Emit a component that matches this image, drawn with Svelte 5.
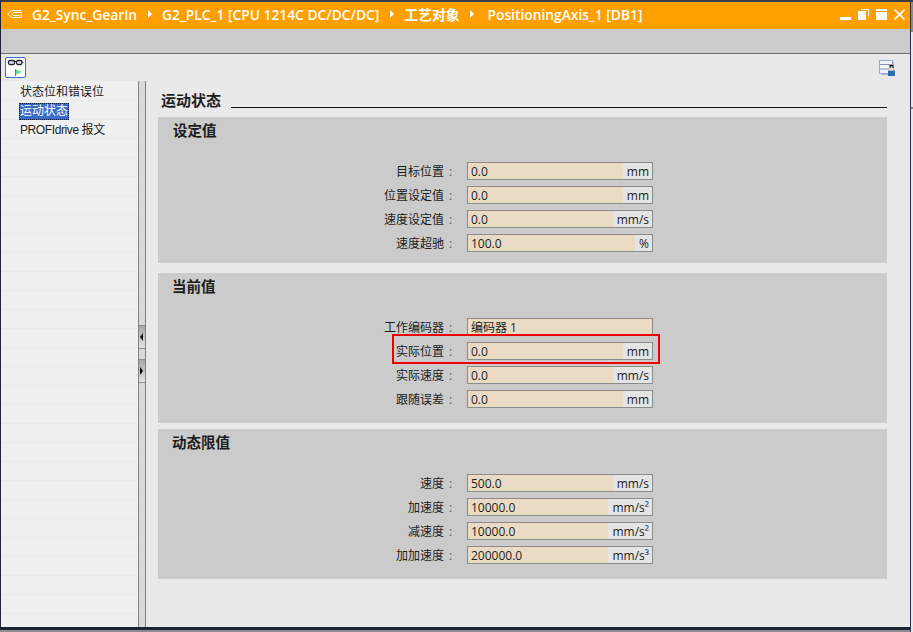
<script lang="ts">
  const navItems = [
    { label: '状态位和错误位' },
    { label: '运动状态', selected: true },
    { label: 'PROFIdrive 报文', tight: true },
    ...Array(26).fill({ label: '' })
  ];

  const sections = [
    {
      title: '设定值',
      gap: 'first',
      rows: [
        { label: '目标位置', value: '0.0', unit: 'mm' },
        { label: '位置设定值', value: '0.0', unit: 'mm' },
        { label: '速度设定值', value: '0.0', unit: 'mm/s' },
        { label: '速度超驰', value: '100.0', unit: '%' }
      ]
    },
    {
      title: '当前值',
      gap: 'second',
      rows: [
        { label: '工作编码器', value: '编码器 1', unit: '' },
        { label: '实际位置', value: '0.0', unit: 'mm', marked: true },
        { label: '实际速度', value: '0.0', unit: 'mm/s' },
        { label: '跟随误差', value: '0.0', unit: 'mm' }
      ]
    },
    {
      title: '动态限值',
      gap: 'third',
      rows: [
        { label: '速度', value: '500.0', unit: 'mm/s' },
        { label: '加速度', value: '10000.0', unit: 'mm/s²' },
        { label: '减速度', value: '10000.0', unit: 'mm/s²' },
        { label: '加加速度', value: '200000.0', unit: 'mm/s³' }
      ]
    }
  ];

  const crumbs = ['G2_Sync_GearIn', 'G2_PLC_1 [CPU 1214C DC/DC/DC]', '工艺对象', 'PositioningAxis_1 [DB1]'];
</script>

<div class="window">
  <div class="frame">
    <header class="titlebar">
      <svg class="title-icon" width="15" height="8" viewBox="0 0 15 8">
        <path d="M14.500.500H4.500L.7 4l3.800 3.500h10V2.500H6L4.500 4 6 5.500h7" fill="none" stroke="#fff" stroke-width="1" />
      </svg>
      {#each crumbs as crumb, i}
        {#if i > 0}<span class="crumb-arrow"></span>{/if}
        <span class="crumb">{crumb}</span>
      {/each}
      <div class="win-buttons">
        <svg width="11" height="11" viewBox="0 0 11 11"><rect x="0" y="8" width="11" height="3" fill="#fff" /></svg>
        <svg width="11" height="11" viewBox="0 0 11 11">
          <path d="M3 .5h7.500v7" fill="none" stroke="#fff" />
          <rect x="0" y="2" width="8" height="9" fill="#fff" />
        </svg>
        <svg width="11" height="11" viewBox="0 0 11 11">
          <rect x="0" y="0" width="11" height="2" fill="#fff" />
          <rect x="0" y="3" width="11" height="8" fill="#fff" />
        </svg>
        <svg width="11" height="11" viewBox="0 0 11 11">
          <path d="M.5.500l10 10M10.500.500l-10 10" stroke="#fff" stroke-width="1.600" />
        </svg>
      </div>
    </header>
    <div class="toolbar"></div>
    <div class="iconbar">
      <span class="mode-btn">
        <svg width="17" height="17" viewBox="0 0 17 17">
          <rect x="1.500" y="1.500" width="6" height="4" rx="1.500" fill="#e4eaf8" stroke="#1c2233" stroke-width="1.300" />
          <rect x="9.500" y="1.500" width="5.500" height="4" rx="1.500" fill="#e4eaf8" stroke="#1c2233" stroke-width="1.300" />
          <path d="M7.500 2.500h2M15 2.500l1.500 1.500" stroke="#1c2233" />
          <path d="M8.500 10v7" stroke="#5a8a60" />
          <path d="M9 10.500v5l6-2.500z" fill="#5fe08a" />
        </svg>
      </span>
      <svg class="corner-icon" width="17" height="17" viewBox="0 0 17 17">
        <rect x="2" y="2" width="13" height="13" fill="#b4b4b4" />
        <rect x=".5" y=".5" width="13" height="13" fill="#f2f4fb" stroke="#9aa6e2" />
        <path d="M1 4.500h12M1 9h12" stroke="#8a90b0" />
        <rect x="9" y="10.500" width="7" height="5.500" fill="#2b6cab" />
        <rect x="10.500" y="5.500" width="4" height="5" fill="#f0d8c0" />
        <path d="M10.500 5h4v3h-1V6.500h-2V8h-1z" fill="#111" />
      </svg>
    </div>
    <div class="body">
      <nav class="nav">
        {#each navItems as item}
          <div class="nav-row">
            <span class="nav-label" class:selected={item.selected} class:tight={item.tight}>{item.label}</span>
          </div>
        {/each}
      </nav>
      <div class="splitter">
        <span class="collapse left"></span>
        <span class="collapse right"></span>
      </div>
      <main class="content">
        <div class="page-heading">
          <span class="page-title">运动状态</span>
          <span class="rule"></span>
        </div>
        {#each sections as section}
          <section class="panel {section.gap}">
            <h2>{section.title}</h2>
            <div class="rows">
              {#each section.rows as row}
                <div class="row">
                  <span class="label">{row.label}<span class="colon">:</span></span>
                  <div class="field">
                    <span class="value">{row.value}</span>
                    {#if row.unit}<span class="unit">{row.unit}</span>{/if}
                  </div>
                  {#if row.marked}<span class="marker"></span>{/if}
                </div>
              {/each}
            </div>
          </section>
        {/each}
      </main>
    </div>
  </div>
  <div class="outer-scroll">
    <span class="thumb top"></span>
    <span class="thumb line"></span>
  </div>
</div>

<style>
  :global(body) {
    margin: 0;
    background: #8c8c8c;
  }

  .window {
    display: flex;
    width: 913px;
    height: 632px;
    overflow: hidden;
    font-family: "Open Sans", "Noto Sans CJK SC", sans-serif;
    color: #1c1c1c;
  }

  .frame {
    display: flex;
    flex-direction: column;
    width: 909px;
    height: 625px;
    border-top: 2px solid #3a3f45;
    border-left: 1px solid #1e2436;
    border-bottom: 3px solid #1e2436;
    flex-shrink: 0;
    background: #e9e9e9;
  }

  .outer-scroll {
    position: relative;
    flex: 1;
    background: #e9e9ec;
    border-left: 1px solid #2a3040;
  }

  .thumb {
    position: absolute;
    left: 0;
    right: 0;
    background: #8a8a8a;
  }

  .thumb.top {
    top: 0;
    height: 30px;
    border-top: 2px solid #3a3f45;
  }

  .thumb.line {
    top: 107px;
    height: 2px;
  }

  .titlebar {
    display: flex;
    align-items: center;
    height: 27px;
    flex-shrink: 0;
    padding: 0 0 3px 6px;
    background: #ff9f00;
    color: #fff;
    font-size: 13.800px;
    font-weight: 600;
    box-sizing: border-box;
  }

  .title-icon {
    margin-right: 10px;
  }

  .crumb {
    white-space: nowrap;
  }

  .crumb:last-of-type {
    margin-left: 3px;
  }

  .crumb-arrow {
    width: 0;
    height: 0;
    margin: 0 10.500px;
    border-left: 4px solid #fff;
    border-top: 4px solid transparent;
    border-bottom: 4px solid transparent;
  }

  .win-buttons {
    display: flex;
    gap: 7px;
    margin-left: auto;
    margin-right: 5px;
    margin-top: 1px;
  }

  .toolbar {
    height: 24px;
    flex-shrink: 0;
    background: #cbcbcb;
    border-bottom: 1px solid #6e6e6e;
  }

  .iconbar {
    display: flex;
    align-items: flex-start;
    justify-content: space-between;
    height: 27px;
    flex-shrink: 0;
    padding: 3px 14px 0 4px;
    box-sizing: border-box;
  }

  .mode-btn {
    display: flex;
    align-items: center;
    justify-content: center;
    width: 19px;
    height: 19px;
    background: #fff;
    border: 1px solid #3c6ecc;
    border-radius: 2px;
  }

  .corner-icon {
    margin-top: 3px;
  }

  .body {
    display: flex;
    flex: 1;
    min-height: 0;
  }

  .nav {
    width: 137px;
    flex-shrink: 0;
    overflow: hidden;
    background: #f0f0f0;
    padding: 1px 0 0 1px;
    box-sizing: border-box;
    font-family: "Liberation Sans", "Noto Sans CJK SC", sans-serif;
  }

  .nav-row {
    display: flex;
    align-items: center;
    height: 19px;
    padding: 3px 0 0 17px;
    box-sizing: border-box;
    border-bottom: 1px solid #eaeaea;
    font-size: 12px;
    white-space: nowrap;
  }

  .nav-label {
    line-height: 17px;
    padding: 0 1px;
  }

  .nav-label.tight {
    letter-spacing: -0.4px;
  }

  .nav-label.selected {
    background: #3a6bc8;
    color: #fff;
    outline: 1px dotted #10224a;
    outline-offset: -1px;
  }

  .splitter {
    display: flex;
    flex-direction: column;
    width: 6px;
    flex-shrink: 0;
    padding-top: 244px;
    background: #d9d9d9;
    border-left: 1px solid #808080;
    border-right: 1px solid #808080;
  }

  .collapse {
    position: relative;
    height: 22px;
    border-top: 1px solid #8e8e8e;
    border-bottom: 1px solid #8e8e8e;
    background: linear-gradient(#a8a8a8, #e2e2e2);
  }

  .collapse.right { margin-top: 10px; }

  .collapse::after {
    content: "";
    position: absolute;
    top: 7px;
    border-top: 4px solid transparent;
    border-bottom: 4px solid transparent;
  }

  .collapse.left::after { left: 1px; border-right: 3px solid #000; }
  .collapse.right::after { left: 1px; border-left: 3px solid #000; }

  .content {
    flex: 1;
    padding: 0 23px 0 12px;
    min-width: 0;
  }

  .page-heading {
    display: flex;
    align-items: flex-end;
    gap: 10px;
    height: 36px;
    padding: 0 0 0 3px;
    font-size: 15px;
    font-weight: 700;
    line-height: 20px;
  }

  .page-title {
    white-space: nowrap;
    margin-bottom: 7px;
  }

  .rule {
    flex: 1;
    height: 1px;
    margin-bottom: 9px;
    background: #111;
  }

  .panel {
    background: #cbcbcb;
    height: 150px;
    margin-bottom: 6px;
  }

  .panel.first {
    height: 146px;
    margin-bottom: 10px;
  }

  .panel h2 {
    margin: 0;
    height: 45px;
    padding: 4px 0 0 15px;
    box-sizing: border-box;
    font-size: 14.500px;
    font-weight: 700;
    line-height: 20px;
  }

  .panel.second h2, .panel.third h2 { padding-left: 14px; }

  .rows {
    display: flex;
    flex-direction: column;
    gap: 6px;
  }

  .row {
    position: relative;
    display: flex;
    align-items: center;
    justify-content: flex-end;
    height: 18px;
    padding-right: 234px;
  }

  .label {
    font-size: 12px;
    line-height: 18px;
    padding-top: 1px;
    white-space: nowrap;
  }

  .colon {
    display: inline-block;
    box-sizing: border-box;
    width: 23px;
    padding-left: 5px;
    color: #555;
  }

  .field {
    display: flex;
    width: 186px;
    height: 18px;
    flex-shrink: 0;
    box-sizing: border-box;
    border: 1px solid #8c8c8c;
    background: #e9dbc4;
    font-size: 12px;
    line-height: 17px;
  }

  .value {
    flex: 1;
    padding-left: 3px;
    white-space: nowrap;
  }

  .unit {
    padding: 0 3px 0 4px;
    background: #e4e4e4;
    white-space: nowrap;
  }

  .marker {
    position: absolute;
    top: -8px;
    left: 234px;
    width: 268px;
    height: 30px;
    box-sizing: border-box;
    border: 2px solid #ee0000;
  }
</style>
